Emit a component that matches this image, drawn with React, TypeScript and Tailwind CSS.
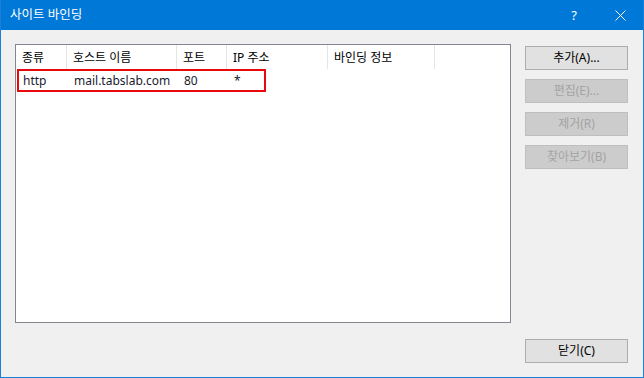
import React from 'react';

const font = { fontFamily: '"Noto Sans", "Noto Sans CJK KR", sans-serif' };

const columns = [
  { label: '종류', w: 'w-[51px]' },
  { label: '호스트 이름', w: 'w-[110px]' },
  { label: '포트', w: 'w-[50px]' },
  { label: 'IP 주소', w: 'w-[101px]' },
  { label: '바인딩 정보', w: 'w-[107px]' },
];

const row = ['http', 'mail.tabslab.com', '80', '*'];

const DialogButton: React.FC<{ label: string; disabled?: boolean }> = ({ label, disabled }) => (
  <button
    disabled={disabled}
    className={`w-[103px] h-[24px] border text-[12px] leading-none flex items-center justify-center ${
      disabled
        ? 'bg-[#cccccc] border-[#bfbfbf] text-[#a3a3a3]'
        : 'bg-[#e1e1e1] border-[#adadad] text-black'
    }`}
  >
    {label}
  </button>
);

export default function App() {
  return (
    <div
      style={font}
      className="w-[644px] h-[378px] flex flex-col bg-[#f0f0f0] border-x border-b border-[#1a7fd6] text-black"
    >
      {/* title bar */}
      <div className="h-[30px] shrink-0 bg-[#0078d7] flex items-center text-white">
        <span className="ml-[9px] text-[12.5px] leading-none">사이트 바인딩</span>
        <span className="ml-auto text-[13px] leading-none mr-[38px]">?</span>
        <svg width="11" height="11" viewBox="0 0 11 11" className="mr-[17px]">
          <path d="M0.5 0.5 L10.5 10.5 M10.5 0.5 L0.5 10.5" stroke="white" strokeWidth="1" />
        </svg>
      </div>

      {/* body */}
      <div className="flex-1 flex pt-[14px] pl-[14px] pr-[14px] pb-[14px] gap-[14px]">
        <div className="w-[496px] h-[279px] border border-[#828790] bg-white relative">
          <div className="flex h-[24px]">
            {columns.map(c => (
              <div
                key={c.label}
                className={`${c.w} h-full border-r border-[#e5e5e5] pl-[6px] pt-[2px] flex items-center text-[12px] leading-none`}
              >
                {c.label}
              </div>
            ))}
          </div>
          <div className="flex h-[23px]">
            {row.map((v, i) => (
              <div
                key={i}
                className={`${columns[i].w} h-full pl-[7px] flex items-center text-[12px] leading-none text-[#1a1a2e]`}
              >
                {v}
              </div>
            ))}
          </div>
          <div className="absolute left-[1px] top-[24px] w-[249px] h-[23px] border-2 border-[#e8090e]" />
        </div>

        <div className="flex flex-col pt-[2px]">
          <div className="flex flex-col gap-[9px]">
            <DialogButton label="추가(A)..." />
            <DialogButton label="편집(E)..." disabled />
            <DialogButton label="제거(R)" disabled />
            <DialogButton label="찾아보기(B)" disabled />
          </div>
          <div className="mt-auto">
            <DialogButton label="닫기(C)" />
          </div>
        </div>
      </div>
    </div>
  );
}
